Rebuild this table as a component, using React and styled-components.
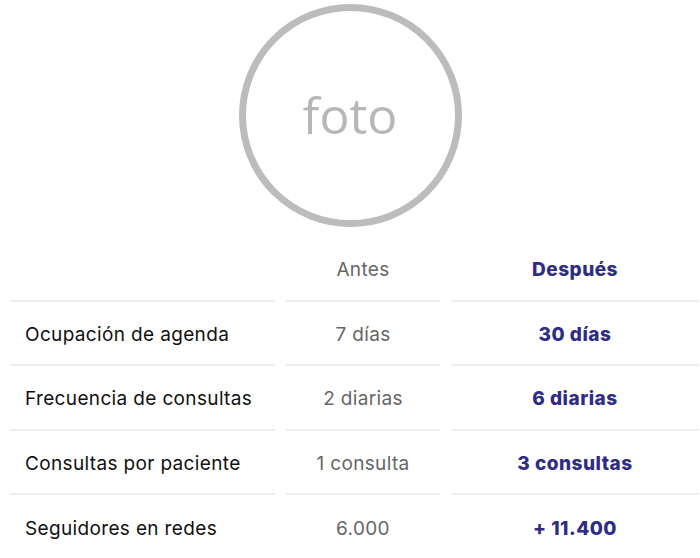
import React from 'react';
import styled, { createGlobalStyle } from 'styled-components';

const Global = createGlobalStyle`
  body {
    margin: 0;
    background: #ffffff;
    font-family: "Inter", "Liberation Sans", sans-serif;
  }
`;

const Page = styled.div`
  width: 700px;
  display: flex;
  flex-direction: column;
  align-items: center;
  padding-top: 4px;
`;

const Photo = styled.div`
  width: 223px;
  height: 223px;
  box-sizing: border-box;
  border: 7px solid #bcbcbc;
  border-radius: 50%;
  display: flex;
  align-items: center;
  justify-content: center;
  font-family: "Open Sans", "Liberation Sans", sans-serif;
  font-size: 50px;
  color: #b7b7b7;
  padding-bottom: 2px;
`;

const Table = styled.div`
  align-self: stretch;
  display: grid;
  grid-template-columns: 265px 154px 248px;
  column-gap: 11px;
  padding-left: 10px;
  margin-top: 10px;
`;

const Cell = styled.div`
  box-sizing: border-box;
  height: 64.5px;
  padding-top: 3px;
  display: flex;
  align-items: center;
  justify-content: ${p => (p.$label ? 'flex-start' : 'center')};
  padding-left: ${p => (p.$label ? '15px' : '0')};
  border-bottom: ${p => (p.$last ? 'none' : '2px solid #eeeeee')};
  font-size: 19px;
  color: ${p => (p.$kind === 'after' ? '#2e2c84' : p.$kind === 'before' ? '#666666' : '#111111')};
  font-weight: ${p => (p.$kind === 'after' ? 800 : 400)};
  letter-spacing: ${p => (p.$kind === 'after' ? '0.5px' : '0.35px')};
`;

const rows = [
  ['Ocupación de agenda', '7 días', '30 días'],
  ['Frecuencia de consultas', '2 diarias', '6 diarias'],
  ['Consultas por paciente', '1 consulta', '3 consultas'],
  ['Seguidores en redes', '6.000', '+ 11.400'],
];

export default function App() {
  return (
    <Page>
      <Global />
      <Photo>foto</Photo>
      <Table>
        <Cell $label />
        <Cell $kind="before">Antes</Cell>
        <Cell $kind="after">Después</Cell>
        {rows.map((r, i) => {
          const last = i === rows.length - 1;
          return (
            <React.Fragment key={r[0]}>
              <Cell $label $last={last}>{r[0]}</Cell>
              <Cell $kind="before" $last={last}>{r[1]}</Cell>
              <Cell $kind="after" $last={last}>{r[2]}</Cell>
            </React.Fragment>
          );
        })}
      </Table>
    </Page>
  );
}
